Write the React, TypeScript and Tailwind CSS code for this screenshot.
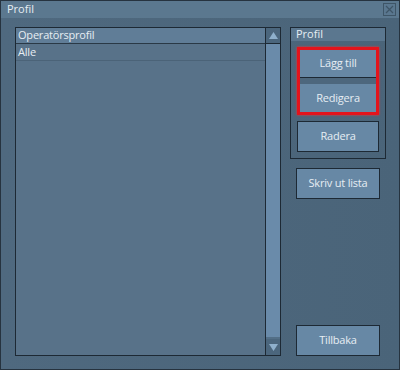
import React from 'react'

const font = { fontFamily: '"Open Sans", "Liberation Sans", sans-serif' }

function Btn({ label, className = '' }: { label: string; className?: string }) {
  return (
    <div
      className={`flex items-center justify-center bg-[#6788a5] text-[11px] tracking-[-0.2px] text-[#e6edf3] ${className}`}
    >
      {label}
    </div>
  )
}

function ScrollBar() {
  return (
    <div className="flex w-[15px] flex-col border-l border-[#1d2934] bg-[#6a8baa]">
      <div className="flex h-[16px] items-center justify-center border-b border-[#1d2934] bg-[#4b667d]">
        <svg width="9" height="7" viewBox="0 0 9 7">
          <polygon points="4.5,0 9,7 0,7" fill="#8fb0cc" />
        </svg>
      </div>
      <div className="flex-1 border-b-2 border-[#536f87]" />
      <div className="flex h-[16px] items-center justify-center bg-[#4b667d]">
        <svg width="9" height="7" viewBox="0 0 9 7">
          <polygon points="0,0 9,0 4.5,7" fill="#8fb0cc" />
        </svg>
      </div>
    </div>
  )
}

export default function App() {
  return (
    <div
      style={font}
      className="flex h-[370px] w-[400px] flex-col border border-[#26333f] bg-[#4d677d] text-[#e6edf3]"
    >
      <div className="flex h-[17px] items-center justify-between bg-[#5b788f] pl-[6px] pr-[3px] text-[11px]">
        <span>Profil</span>
        <div className="flex h-[13px] w-[13px] items-center justify-center border border-[#3e5567] bg-[#5a778f]">
          <svg width="9" height="9" viewBox="0 0 9 9">
            <path d="M1 1 L8 8 M8 1 L1 8" stroke="#3e5567" strokeWidth="1.2" />
          </svg>
        </div>
      </div>

      <div className="flex flex-1 gap-[9px] bg-gradient-to-r from-[#4f697f] to-[#4a6479] pb-[13px] pl-[14px] pr-[12px] pt-[9px]">
        <div className="flex w-[266px] border border-[#1d2934] bg-[#587289]">
          <div className="flex flex-1 flex-col text-[11px] tracking-[-0.2px]">
            <div className="flex h-[16px] items-center border-b border-[#2a3946] bg-[#607d97] pl-[2px]">
              Operatörsprofil
            </div>
            <div className="flex h-[17px] items-center border-b border-[#4b6378] pl-[2px]">
              Alle
            </div>
          </div>
          <ScrollBar />
        </div>

        <div className="flex w-[96px] flex-col">
          <div className="flex h-[132px] flex-col border border-[#1d2934]">
            <div className="flex h-[13px] items-center bg-[#5b778f] pl-[5px] text-[11px]">
              Profil
            </div>
            <div className="flex flex-col px-[6px] pt-[6px]">
              <div className="flex flex-col border-[3px] border-[#e3141c] bg-[#4d677d] shadow-[0_0_2px_#ff3030]">
                <Btn label="Lägg till" className="h-[28px] border-b border-[#1d2934]" />
                <div className="h-[6px]" />
                <Btn label="Redigera" className="h-[28px]" />
              </div>
              <Btn label="Radera" className="mt-[6px] h-[31px] border border-[#1d2934]" />
            </div>
          </div>
          <div className="mt-[9px] px-[6px]">
            <Btn label="Skriv ut lista" className="h-[31px] border border-[#1d2934]" />
          </div>
          <div className="mt-auto px-[6px]">
            <Btn label="Tillbaka" className="h-[31px] border border-[#1d2934]" />
          </div>
        </div>
      </div>
    </div>
  )
}
